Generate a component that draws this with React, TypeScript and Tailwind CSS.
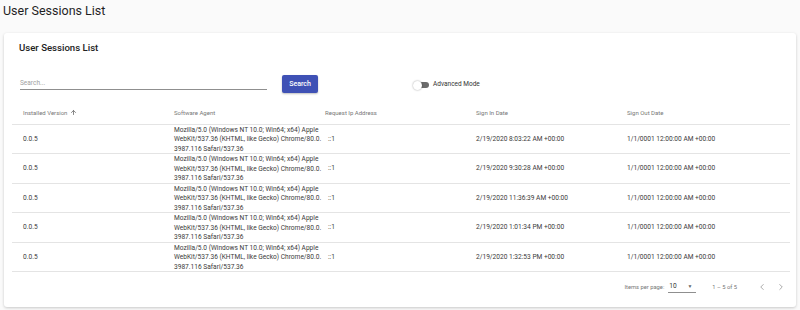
import { ArrowUp, ChevronLeft, ChevronRight } from 'lucide-react';

const agentLines = [
  'Mozilla/5.0 (Windows NT 10.0; Win64; x64) Apple',
  'WebKit/537.36 (KHTML, like Gecko) Chrome/80.0.',
  '3987.116 Safari/537.36',
];

const sessions = [
  { version: '0.0.5', ip: '::1', signIn: '2/19/2020 8:03:22 AM +00:00', signOut: '1/1/0001 12:00:00 AM +00:00' },
  { version: '0.0.5', ip: '::1', signIn: '2/19/2020 9:30:28 AM +00:00', signOut: '1/1/0001 12:00:00 AM +00:00' },
  { version: '0.0.5', ip: '::1', signIn: '2/19/2020 11:36:39 AM +00:00', signOut: '1/1/0001 12:00:00 AM +00:00' },
  { version: '0.0.5', ip: '::1', signIn: '2/19/2020 1:01:34 PM +00:00', signOut: '1/1/0001 12:00:00 AM +00:00' },
  { version: '0.0.5', ip: '::1', signIn: '2/19/2020 1:32:53 PM +00:00', signOut: '1/1/0001 12:00:00 AM +00:00' },
];

export default function App() {
  return (
    <div className="min-h-screen bg-[#fafafa] font-['Roboto',sans-serif] text-[#212121]">
      {/* Page title */}
      <h1 className="h-[33px] pl-[3px] pt-[2px] text-[12.5px] leading-[17px] text-[#1f1f1f]">User Sessions List</h1>

      {/* Card */}
      <div className="mx-[4px] h-[274px] rounded-[3px] bg-white shadow-[0_1px_3px_rgba(0,0,0,0.2)]">
        <h2 className="pl-[15px] pt-[8px] text-[9.6px] font-medium leading-[13px] text-[#222]">User Sessions List</h2>

        {/* Search row */}
        <div className="mt-[21px] flex h-[18px] items-start">
          <div className="ml-[16px] h-[15px] w-[247px] border-b border-[#8f8f8f] pt-[4px] text-[6.5px] leading-[9px] text-[#a0a0a0]">
            Search...
          </div>
          <button className="ml-[15px] h-[18px] w-[36px] rounded-[2px] bg-[#3f51b5] text-[7px] font-medium text-white shadow-[0_1px_2px_rgba(0,0,0,0.25)]">
            Search
          </button>
          <div className="ml-[95px] flex h-[18px] items-center pt-[2px]">
            <div className="relative h-[6px] w-[16px]">
              <div className="ml-[3px] h-[6px] w-[13px] rounded-full bg-[#6b6b6b]" />
              <div className="absolute left-0 top-[-1.5px] h-[9px] w-[9px] rounded-full bg-white shadow-[0_0_2px_rgba(0,0,0,0.4)]" />
            </div>
            <span className="ml-[4px] text-[6.5px] text-[#333]">Advanced Mode</span>
          </div>
        </div>

        {/* Table */}
        <div className="mx-[8px] mt-[7px] w-[778px]">
          <div className="grid h-[24.5px] grid-cols-[162px_151px_151px_151px_1fr] items-center border-b border-[#e4e4e4] pt-[1px] text-[6px] text-[#777]">
            <div className="flex items-center pl-[11px]">
              Installed Version
              <ArrowUp className="ml-[3px] h-[7px] w-[7px]" strokeWidth={3} />
            </div>
            <div>Software Agent</div>
            <div>Request Ip Address</div>
            <div>Sign In Date</div>
            <div>Sign Out Date</div>
          </div>
          {sessions.map((s, i) => (
            <div
              key={i}
              className="grid h-[29.5px] grid-cols-[162px_151px_151px_151px_1fr] items-center border-b border-[#e4e4e4] text-[6.6px] text-[#3a3a3a]"
            >
              <div className="pl-[11px]">{s.version}</div>
              <div className="whitespace-nowrap pt-[1px] leading-[9.7px]">
                {agentLines.map((l) => (
                  <div key={l}>{l}</div>
                ))}
              </div>
              <div className="pl-[3px]">{s.ip}</div>
              <div>{s.signIn}</div>
              <div>{s.signOut}</div>
            </div>
          ))}

          {/* Paginator */}
          <div className="mt-[7px] flex h-[16px] items-center justify-end text-[5.8px] text-[#777]">
            <span>Items per page:</span>
            <div className="ml-[4px] flex h-[12px] w-[28px] items-center justify-between border-b border-[#8f8f8f] text-[6.6px] text-[#333]">
              <span className="ml-[1px]">10</span>
              <span className="mr-[4px] text-[5px] text-[#666]">▼</span>
            </div>
            <span className="ml-[16px]">1 – 5 of 5</span>
            <ChevronLeft className="ml-[20px] h-[10px] w-[10px] text-[#9a9a9a]" />
            <ChevronRight className="ml-[9px] mr-[4px] h-[10px] w-[10px] text-[#9a9a9a]" />
          </div>
        </div>
      </div>
    </div>
  );
}
